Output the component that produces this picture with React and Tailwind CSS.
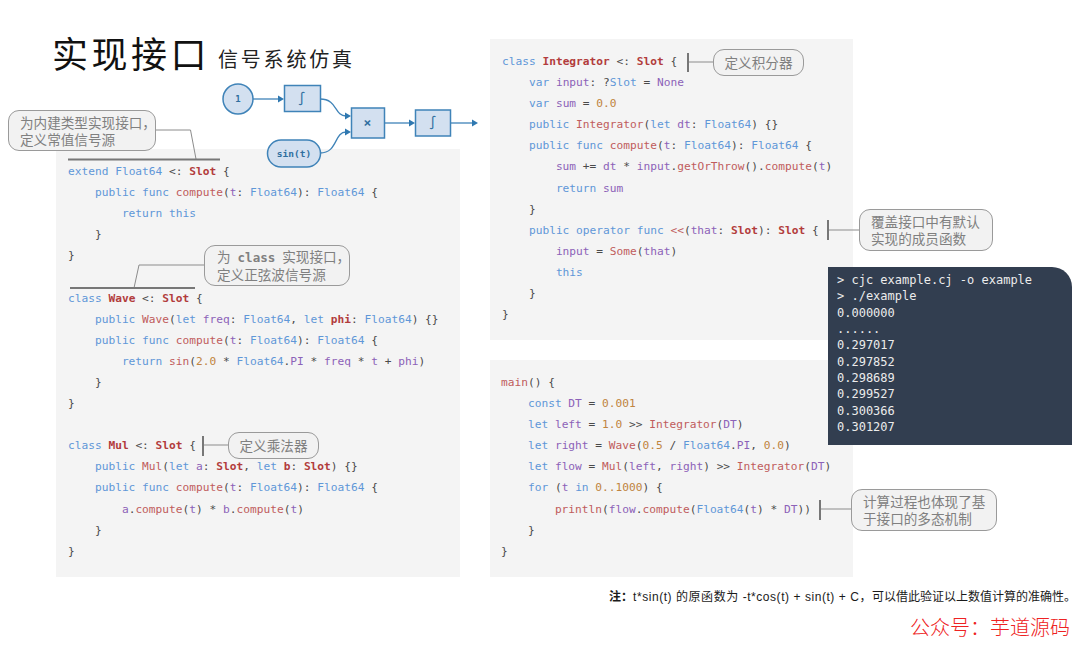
const tones = {
    k: "text-[#5f97d8]",
    f: "text-[#c05c5c]",
    t: "font-bold text-[#b23c3c]",
    v: "text-[#8c62b8]",
    n: "text-[#c0853f]",
    p: "text-[#4a4a4a]",
};

// full width punctuation of the chinese texts
const COMMA = "\uFF0C";
const COLON = "\uFF1A";

// each line is "tone:text" pieces, tone p is plain punctuation
const extendLines = [
    ["k:extend ", "k:Float64", "p: <: ", "t:Slot", "p: {"],
    ["k:    public func ", "f:compute", "p:(", "v:t", "p:: ", "k:Float64", "p:): ", "k:Float64", "p: {"],
    ["k:        return this"],
    ["p:    }"],
    ["p:}"],
    [],
    ["k:class ", "t:Wave", "p: <: ", "t:Slot", "p: {"],
    ["k:    public ", "f:Wave", "p:(", "k:let ", "v:freq", "p:: ", "k:Float64", "p:, ", "k:let ", "t:phi", "p:: ", "k:Float64", "p:) {}"],
    ["k:    public func ", "f:compute", "p:(", "v:t", "p:: ", "k:Float64", "p:): ", "k:Float64", "p: {"],
    ["k:        return ", "f:sin", "p:(", "n:2.0", "p: * ", "k:Float64", "p:.", "v:PI", "p: * ", "v:freq", "p: * ", "v:t", "p: + ", "v:phi", "p:)"],
    ["p:    }"],
    ["p:}"],
    [],
    ["k:class ", "t:Mul", "p: <: ", "t:Slot", "p: {"],
    ["k:    public ", "f:Mul", "p:(", "k:let ", "v:a", "p:: ", "t:Slot", "p:, ", "k:let ", "t:b", "p:: ", "t:Slot", "p:) {}"],
    ["k:    public func ", "f:compute", "p:(", "v:t", "p:: ", "k:Float64", "p:): ", "k:Float64", "p: {"],
    ["v:        a", "p:.", "f:compute", "p:(", "v:t", "p:) * ", "v:b", "p:.", "f:compute", "p:(", "v:t", "p:)"],
    ["p:    }"],
    ["p:}"],
];

const integratorLines = [
    ["k:class ", "t:Integrator", "p: <: ", "t:Slot", "p: {"],
    ["k:    var ", "v:input", "p:: ?", "k:Slot", "p: = ", "v:None"],
    ["k:    var ", "v:sum", "p: = ", "n:0.0"],
    ["k:    public ", "f:Integrator", "p:(", "k:let ", "v:dt", "p:: ", "k:Float64", "p:) {}"],
    ["k:    public func ", "f:compute", "p:(", "v:t", "p:: ", "k:Float64", "p:): ", "k:Float64", "p: {"],
    ["v:        sum", "p: += ", "v:dt", "p: * ", "v:input", "p:.", "f:getOrThrow", "p:().", "f:compute", "p:(", "v:t", "p:)"],
    ["k:        return ", "v:sum"],
    ["p:    }"],
    ["k:    public operator func ", "f:<<", "p:(", "v:that", "p:: ", "t:Slot", "p:): ", "t:Slot", "p: {"],
    ["v:        input", "p: = ", "f:Some", "p:(", "v:that", "p:)"],
    ["k:        this"],
    ["p:    }"],
    ["p:}"],
];

const mainLines = [
    ["f:main", "p:() {"],
    ["k:    const ", "v:DT", "p: = ", "n:0.001"],
    ["k:    let ", "v:left", "p: = ", "n:1.0", "p: >> ", "f:Integrator", "p:(", "v:DT", "p:)"],
    ["k:    let ", "v:right", "p: = ", "f:Wave", "p:(", "n:0.5", "p: / ", "k:Float64", "p:.", "v:PI", "p:, ", "n:0.0", "p:)"],
    ["k:    let ", "v:flow", "p: = ", "f:Mul", "p:(", "v:left", "p:, ", "v:right", "p:) >> ", "f:Integrator", "p:(", "v:DT", "p:)"],
    ["k:    for ", "p:(", "v:t", "k: in ", "n:0..1000", "p:) {"],
    ["f:        println", "p:(", "v:flow", "p:.", "f:compute", "p:(", "k:Float64", "p:(", "v:t", "p:) * ", "v:DT", "p:))"],
    ["p:    }"],
    ["p:}"],
];

const outputLines = [
    "> cjc example.cj -o example",
    "> ./example",
    "0.000000",
    "......",
    "0.297017",
    "0.297852",
    "0.298689",
    "0.299527",
    "0.300366",
    "0.301207",
];

const CodeLine = ({ pieces }) => (
    <div className="h-[21.1px] whitespace-pre">
        {pieces.map((piece, index) => (
            <span key={index} className={tones[piece[0]]}>
                {piece.slice(2)}
            </span>
        ))}
    </div>
);

const CodePanel = ({ lines, className }) => (
    <div
        className={`bg-[#f4f4f4] pt-[12px] font-['DejaVu_Sans_Mono',monospace] text-[11.2px] leading-[21.1px] ${className}`}
    >
        {lines.map((pieces, index) => (
            <CodeLine key={index} pieces={pieces} />
        ))}
    </div>
);

const Callout = ({ className, children }) => (
    <div
        className={`absolute flex flex-col justify-center rounded-[11px] border border-[#9a9a9a] bg-[#f2f2f2] font-['Noto_Sans_CJK_SC',sans-serif] text-[13.6px] leading-[17px] whitespace-nowrap text-[#808080] ${className}`}
    >
        {children}
    </div>
);

// node diagram and the leader lines of the callouts
const Drawing = () => (
    <svg
        className="absolute top-0 left-0"
        width="1080"
        height="648"
        viewBox="0 0 1080 648"
        fill="none"
    >
        <g stroke="#3f83b8" strokeWidth="1.3">
            <path d="M253 99H278" />
            <path d="M320 99C338 99 334 116 346 116" />
            <path d="M320 153C338 153 334 132 346 132" />
            <path d="M384 123H410" />
            <path d="M451 123H473" />
        </g>
        <g fill="#2f78b0">
            <path d="M278 95.5L284 99L278 102.5Z" />
            <path d="M345 112.5L351 116L345 119.5Z" />
            <path d="M345 128.5L351 132L345 135.5Z" />
            <path d="M409 119.5L415 123L409 126.5Z" />
            <path d="M472 119.5L478 123L472 126.5Z" />
        </g>
        <g fill="#d3e0f0" stroke="#3f83b8" strokeWidth="1.5">
            <circle cx="238" cy="99" r="15" />
            <rect x="284.5" y="85.5" width="36" height="26" />
            <rect x="351.5" y="108" width="33" height="30" />
            <rect x="415.5" y="110" width="35" height="26" />
            <rect x="267.5" y="140" width="53" height="27" rx="13.5" />
        </g>
        <g
            fill="#2f6f9f"
            textAnchor="middle"
            fontFamily="DejaVu Sans Mono, monospace"
        >
            <text x="238" y="102" fontSize="9" fontWeight="700">1</text>
            <text x="302" y="103" fontSize="13">∫</text>
            <text x="367.5" y="127" fontSize="13" fontWeight="700">×</text>
            <text x="433" y="127" fontSize="13">∫</text>
            <text x="294" y="157" fontSize="9.5" fontWeight="700">sin(t)</text>
        </g>
        <g stroke="#8c8c8c" strokeWidth="1">
            <path d="M155 130H190.500L196 159" />
            <path d="M204 265H139L134 288" />
            <path d="M203 445H228" />
            <path d="M688 62H713" />
            <path d="M828 230H859" />
            <path d="M820 509H851" />
        </g>
        <g stroke="#777777" strokeWidth="2">
            <path d="M68 159.500H220" />
            <path d="M70 288H195" />
            <path d="M203 436V456" />
            <path d="M688 53V72" />
            <path d="M828 220V240" />
            <path d="M820 500V520" />
        </g>
    </svg>
);

const App = () => (
    <div className="relative h-[648px] w-[1080px] overflow-hidden bg-white font-['Noto_Sans_CJK_SC',sans-serif]">
        <div className="flex gap-[30px] pl-[56px]">
            <div className="flex w-[404px] flex-col">
                <div className="flex h-[149px] items-start gap-[8px] pt-[27px]">
                    <h1 className="-ml-[4px] text-[36px] leading-[50px] font-normal tracking-[3.500px] text-[#111111]">
                        实现接口
                    </h1>
                    <h2 className="pt-[18px] text-[20px] leading-[28px] font-normal tracking-[2.800px] text-[#222222]">
                        信号系统仿真
                    </h2>
                </div>
                <CodePanel lines={extendLines} className="h-[428px] pl-[12px]" />
            </div>
            <div className="flex w-[363px] flex-col gap-[20px] pt-[39px]">
                <CodePanel lines={integratorLines} className="h-[301px] pl-[12px]" />
                <CodePanel lines={mainLines} className="h-[217px] pl-[11px]" />
            </div>
        </div>

        <div className="flex flex-col items-end">
            <p className="pt-[11px] pr-[4px] font-['Liberation_Sans','Noto_Sans_CJK_SC',sans-serif] text-[12px] leading-[18px] whitespace-nowrap text-[#1a1a1a]">
                <span className="font-bold">注{COLON}</span>
                <span className="tracking-[0.550px]">{`t*sin(t) 的原函数为 -t*cos(t) + sin(t) + C${COMMA}`}</span>
                可以借此验证以上数值计算的准确性。
            </p>
            <p className="pt-[7px] pr-[10px] text-[20px] leading-[28px] font-light whitespace-nowrap text-[#ee2222]">
                公众号{COLON}芋道源码
            </p>
        </div>

        <Drawing />

        <Callout className="top-[110px] left-[8px] h-[41px] w-[148px] pl-[11px]">
            <span>为内建类型实现接口{COMMA}</span>
            <span>定义常值信号源</span>
        </Callout>
        <Callout className="top-[245px] left-[204px] h-[41px] w-[146px] pl-[12px]">
            <span>
                为
                <b className="mx-[7px] font-['DejaVu_Sans_Mono',monospace] text-[12.500px]">class</b>
                实现接口{COMMA}
            </span>
            <span>定义正弦波信号源</span>
        </Callout>
        <Callout className="top-[432px] left-[228px] h-[27px] w-[91px] items-center">
            定义乘法器
        </Callout>
        <Callout className="top-[49px] left-[713px] h-[27px] w-[91px] items-center">
            定义积分器
        </Callout>
        <Callout className="top-[209px] left-[859px] h-[42px] w-[134px] pl-[11px]">
            <span>覆盖接口中有默认</span>
            <span>实现的成员函数</span>
        </Callout>
        <Callout className="top-[489px] left-[851px] h-[42px] w-[146px] pl-[11px]">
            <span>计算过程也体现了基</span>
            <span>于接口的多态机制</span>
        </Callout>

        <div className="absolute top-[267px] left-[828px] h-[178px] w-[244px] rounded-tr-[20px] bg-[#323e50] pt-[5px] pl-[9px] font-['DejaVu_Sans_Mono',monospace] text-[12px] leading-[16.350px] whitespace-pre text-[#ececec]">
            {outputLines.map((line, index) => (
                <div key={index}>{line}</div>
            ))}
        </div>
    </div>
);

export default App;
